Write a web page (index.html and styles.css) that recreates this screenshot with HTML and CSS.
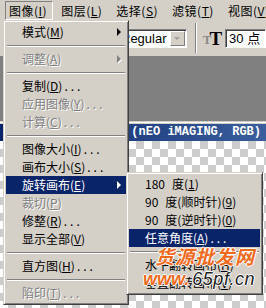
FILE: index.html
```html
<!DOCTYPE html>
<html>

<head>
    <title>图像菜单</title>
    <meta charset="UTF-8">
    <link rel="stylesheet" href="styles.css">
</head>

<body>
    <div class="app">
        <div class="menubar">
            <span class="bar-item pressed">图像(<u>I</u>)</span>
            <span class="bar-item">图层(<u>L</u>)</span>
            <span class="bar-item">选择(<u>S</u>)</span>
            <span class="bar-item">滤镜(<u>T</u>)</span>
            <span class="bar-item">视图(<u>V</u>)</span>
        </div>

        <div class="options">
            <div class="select">
                <span class="select-text">Regular</span>
                <span class="select-btn"></span>
            </div>
            <div class="vsep"></div>
            <div class="size-icon"><span class="t-small">T</span><span class="t-big">T</span></div>
            <div class="field">30 点</div>
        </div>

        <div class="workspace"></div>

        <div class="doc">
            <div class="titlebar">未标题-1 @ 100% (nEO iMAGING, RGB)</div>
            <div class="canvas"></div>
        </div>

        <div class="menu main-menu">
            <div class="item">模式(<u>M</u>)<span class="arrow"></span></div>
            <div class="sep"></div>
            <div class="item disabled">调整(<u>A</u>)<span class="arrow"></span></div>
            <div class="sep"></div>
            <div class="item">复制(<u>D</u>)<span class="dots">...</span></div>
            <div class="item disabled">应用图像(<u>Y</u>)<span class="dots">...</span></div>
            <div class="item disabled">计算(<u>C</u>)<span class="dots">...</span></div>
            <div class="sep"></div>
            <div class="item">图像大小(<u>I</u>)<span class="dots">...</span></div>
            <div class="item">画布大小(<u>S</u>)<span class="dots">...</span></div>
            <div class="item active">旋转画布(<u>E</u>)<span class="arrow"></span></div>
            <div class="item disabled">裁切(<u>P</u>)</div>
            <div class="item">修整(<u>R</u>)<span class="dots">...</span></div>
            <div class="item">显示全部(<u>V</u>)</div>
            <div class="sep"></div>
            <div class="item">直方图(<u>H</u>)<span class="dots">...</span></div>
            <div class="sep"></div>
            <div class="item disabled">陷印(<u>T</u>)<span class="dots">...</span></div>
        </div>

        <div class="menu sub-menu">
            <div class="item">180<span class="gap"></span>度(<u>1</u>)</div>
            <div class="item">90<span class="gap"></span>度(顺时针)(<u>9</u>)</div>
            <div class="item">90<span class="gap"></span>度(逆时针)(<u>0</u>)</div>
            <div class="item active">任意角度(<u>A</u>)<span class="dots">...</span></div>
            <div class="sep"></div>
            <div class="item">水平翻转画布(<u>H</u>)</div>
            <div class="item">垂直翻转画布(<u>V</u>)</div>
        </div>

        <div class="watermark">
            <div class="wm-title">货源批发网</div>
            <div class="wm-url"><span class="wm-www">www.</span><span class="wm-domain">65pf.cn</span></div>
        </div>
    </div>
</body>

</html>
```

FILE: styles.css
```css
body {
    margin: 0;
    padding: 0;
    background-color: #d4d0c8;
    font-family: "Noto Sans CJK SC", sans-serif;
    font-size: 12px;
}

.app {
    position: relative;
    width: 266px;
    height: 308px;
    overflow: hidden;
    background-color: #d4d0c8;
}

u {
    text-decoration: underline;
    text-underline-offset: 1px;
}

/* menu bar */

.menubar {
    height: 20px;
    display: flex;
    align-items: center;
    padding-left: 5px;
    gap: 4px;
    color: #000;
    white-space: nowrap;
}

.bar-item {
    height: 17px;
    line-height: 17px;
    padding: 0 5px 0 3px;
    letter-spacing: 0.5px;
    border: 1px solid transparent;
}

.bar-item.pressed {
    border-color: #808080 #fff #fff #808080;
}

/* options bar */

.options {
    height: 36px;
    display: flex;
    align-items: center;
    padding-left: 113px;
}

.select {
    width: 80px;
    height: 17px;
    display: flex;
    background-color: #fff;
    border: 1px solid;
    border-color: #808080 #fff #fff #808080;
    box-shadow: inset 1px 1px #404040;
}

.select-text {
    flex: 1;
    padding-left: 7px;
    font-family: "Liberation Sans", sans-serif;
    font-size: 13px;
    line-height: 17px;
}

.select-btn {
    width: 15px;
    margin: 1px;
    background-color: #d4d0c8;
    border: 1px solid;
    border-color: #fff #808080 #808080 #fff;
    box-sizing: border-box;
    display: flex;
    align-items: center;
    justify-content: center;
}

.select-btn::after {
    content: "";
    border-top: 3px solid #a0a0a0;
    border-left: 3px solid transparent;
    border-right: 3px solid transparent;
}

.vsep {
    width: 1px;
    height: 30px;
    margin-left: 8px;
    background-color: #808080;
    border-right: 1px solid #fff;
}

.size-icon {
    display: flex;
    align-items: flex-end;
    margin-left: 6px;
    font-family: "Liberation Serif", serif;
    font-weight: bold;
}

.t-small {
    font-size: 13px;
    color: #8a8a8a;
    line-height: 14px;
}

.t-big {
    font-size: 19px;
    color: #000;
    margin-left: -2px;
    line-height: 17px;
}

.field {
    margin-left: 3px;
    width: 40px;
    height: 17px;
    line-height: 17px;
    padding-left: 3px;
    background-color: #fff;
    border: 1px solid;
    border-color: #808080 #fff #fff #808080;
    box-shadow: inset 1px 1px #404040;
    font-family: "Liberation Sans", "Noto Sans CJK SC", sans-serif;
    font-size: 13px;
}

/* workspace */

.workspace {
    height: 65px;
    background-color: #808080;
}

.doc {
    border-top: 1px solid #d4d0c8;
    box-shadow: inset 0 1px #fff;
    padding-top: 2px;
}

.titlebar {
    height: 17px;
    line-height: 17px;
    display: flex;
    justify-content: flex-end;
    padding-right: 5px;
    background: linear-gradient(to right, #0a246a, #3a5f9c);
    color: #fff;
    font-family: "Liberation Mono", monospace;
    font-weight: bold;
    font-size: 12px;
    white-space: nowrap;
}

.canvas {
    height: 200px;
    background-color: #fff;
    background-image:
        linear-gradient(45deg, #cccccc 25%, transparent 25%, transparent 75%, #cccccc 75%),
        linear-gradient(45deg, #cccccc 25%, transparent 25%, transparent 75%, #cccccc 75%);
    background-size: 16px 16px;
    background-position: 0 0, 8px 8px;
}

/* drop down menus */

.menu {
    position: absolute;
    background-color: #d4d0c8;
    border: 1px solid;
    border-color: #d4d0c8 #404040 #404040 #d4d0c8;
    box-shadow: inset 1px 1px #fff, inset -1px -1px #808080;
    padding: 2px;
    white-space: nowrap;
}

.main-menu {
    left: 3px;
    top: 20px;
    width: 120px;
}

.sub-menu {
    left: 126px;
    top: 172px;
    width: 131px;
}

.item {
    height: 18px;
    line-height: 18px;
    display: flex;
    align-items: center;
    padding-left: 16px;
    color: #000;
}

.item.disabled {
    color: #808080;
    text-shadow: 1px 1px #fff;
}

.item.active {
    background-color: #0a246a;
    color: #fff;
}

.gap {
    width: 7px;
}

.dots {
    margin-left: 2px;
    letter-spacing: 3px;
}

.arrow {
    margin-left: auto;
    margin-right: 5px;
    border-left: 4px solid currentColor;
    border-top: 4px solid transparent;
    border-bottom: 4px solid transparent;
}

.item.disabled .arrow {
    filter: drop-shadow(1px 1px #fff);
}

.sep {
    height: 0;
    margin: 4px 1px 3px;
    border-top: 1px solid #808080;
    border-bottom: 1px solid #fff;
}

/* watermark */

.watermark {
    position: absolute;
    left: 143px;
    top: 244px;
    font-weight: bold;
    font-style: italic;
    text-shadow: 1px 0 #fff, -1px 0 #fff, 0 1px #fff, 0 -1px #fff;
}

.wm-title {
    margin-left: 12px;
    font-size: 19px;
    line-height: 24px;
    letter-spacing: 1px;
    color: #f26b1d;
}

.wm-url {
    font-family: "Liberation Sans", sans-serif;
    font-size: 18px;
    line-height: 22px;
}

.wm-www {
    color: #f26b1d;
}

.wm-domain {
    margin-left: 3px;
    color: #222;
    font-weight: normal;
    font-size: 18px;
    letter-spacing: 0.5px;
}
```
